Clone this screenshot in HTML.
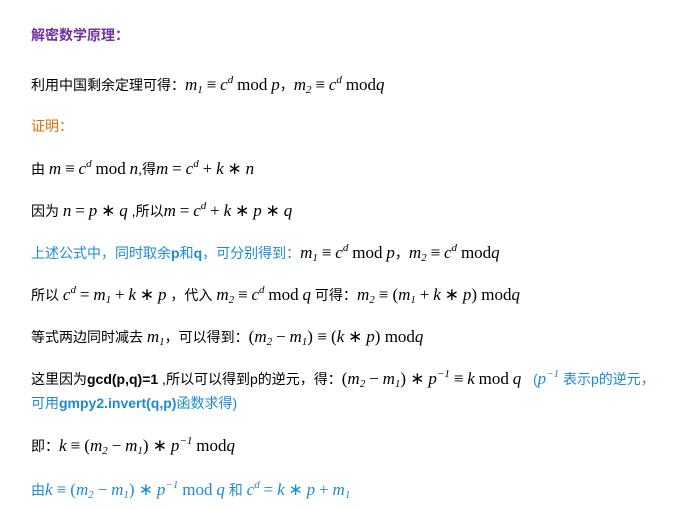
<!DOCTYPE html>
<html><head><meta charset="utf-8"><style>
body{margin:0;width:692px;height:509px;background:#fff;font-family:"Liberation Sans","Noto Sans CJK SC",sans-serif;font-size:14px;color:#000;position:relative;overflow:hidden}
.l{position:absolute;left:31px;white-space:nowrap;line-height:20px}
i{font-family:"Liberation Serif",serif;font-size:17px;font-style:italic}
.r{font-family:"Liberation Serif",serif;font-size:17px;font-style:normal}
sup{font-size:11px;vertical-align:7px;line-height:0}
sub{font-size:11px;vertical-align:-3px;line-height:0}
.p{color:#7030a0;font-weight:bold}
.o{color:#e36c09}
.b{color:#1c8ad6}
</style></head><body>
<div class="l p" style="top:25px">解密数学原理：</div>
<div class="l" style="top:75px">利用中国剩余定理可得：<i>m<sub>1</sub></i> <span class="r">≡</span> <i>c<sup>d</sup></i> <span class="r">mod</span> <i>p</i>，<i>m<sub>2</sub></i> <span class="r">≡</span> <i>c<sup>d</sup></i> <span class="r">mod</span><i>q</i></div>
<div class="l o" style="top:116px">证明：</div>
<div class="l" style="top:159px">由 <i>m</i> <span class="r">≡</span> <i>c<sup>d</sup></i> <span class="r">mod</span> <i>n</i>,得<i>m</i> <span class="r">=</span> <i>c<sup>d</sup></i> <span class="r">+</span> <i>k</i> <span class="r">∗</span> <i>n</i></div>
<div class="l" style="top:201px">因为 <i>n</i> <span class="r">=</span> <i>p</i> <span class="r">∗</span> <i>q</i> ,所以<i>m</i> <span class="r">=</span> <i>c<sup>d</sup></i> <span class="r">+</span> <i>k</i> <span class="r">∗</span> <i>p</i> <span class="r">∗</span> <i>q</i></div>
<div class="l" style="top:243px"><span class="b">上述公式中，同时取余<b>p</b>和<b>q</b>，可分别得到：</span><i>m<sub>1</sub></i> <span class="r">≡</span> <i>c<sup>d</sup></i> <span class="r">mod</span> <i>p</i>，<i>m<sub>2</sub></i> <span class="r">≡</span> <i>c<sup>d</sup></i> <span class="r">mod</span><i>q</i></div>
<div class="l" style="top:285px">所以 <i>c<sup>d</sup></i> <span class="r">=</span> <i>m<sub>1</sub></i> <span class="r">+</span> <i>k</i> <span class="r">∗</span> <i>p</i> ，代入 <i>m<sub>2</sub></i> <span class="r">≡</span> <i>c<sup>d</sup></i> <span class="r">mod</span> <i>q</i> 可得：<i>m<sub>2</sub></i> <span class="r">≡ (</span><i>m<sub>1</sub></i> <span class="r">+</span> <i>k</i> <span class="r">∗</span> <i>p</i><span class="r">) mod</span><i>q</i></div>
<div class="l" style="top:327px">等式两边同时减去 <i>m<sub>1</sub></i>，可以得到：<span class="r">(</span><i>m<sub>2</sub></i> <span class="r">−</span> <i>m<sub>1</sub></i><span class="r">) ≡ (</span><i>k</i> <span class="r">∗</span> <i>p</i><span class="r">) mod</span><i>q</i></div>
<div class="l" style="top:369px">这里因为<b>gcd(p,q)=1</b> ,所以可以得到p的逆元，得：<span class="r">(</span><i>m<sub>2</sub></i> <span class="r">−</span> <i>m<sub>1</sub></i><span class="r">) ∗</span> <i>p<sup>−1</sup></i> <span class="r">≡</span> <i>k</i> <span class="r">mod</span> <i>q</i> &nbsp;&nbsp;<span class="b">(<i>p<sup>−1</sup></i> 表示p的逆元，</span></div>
<div class="l b" style="top:393px">可用<b>gmpy2.invert(q,p)</b>函数求得)</div>
<div class="l" style="top:436px">即：<i>k</i> <span class="r">≡ (</span><i>m<sub>2</sub></i> <span class="r">−</span> <i>m<sub>1</sub></i><span class="r">) ∗</span> <i>p<sup>−1</sup></i> <span class="r">mod</span><i>q</i></div>
<div class="l b" style="top:480px">由<i>k</i> <span class="r">≡ (</span><i>m<sub>2</sub></i> <span class="r">−</span> <i>m<sub>1</sub></i><span class="r">) ∗</span> <i>p<sup>−1</sup></i> <span class="r">mod</span> <i>q</i> 和 <i>c<sup>d</sup></i> <span class="r">=</span> <i>k</i> <span class="r">∗</span> <i>p</i> <span class="r">+</span> <i>m<sub>1</sub></i></div>
</body></html>
